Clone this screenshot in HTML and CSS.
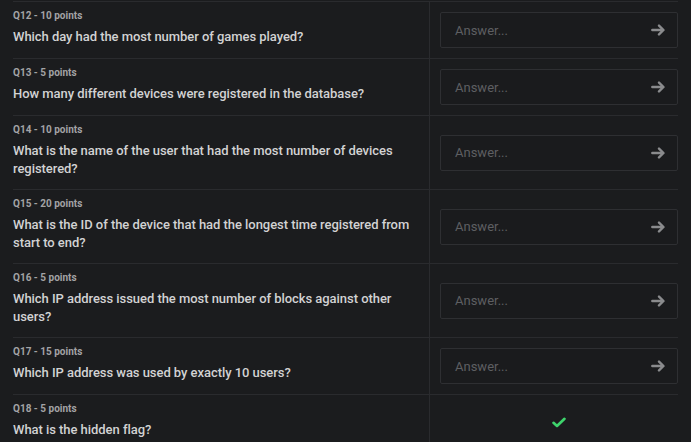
FILE: index.html
```html
<!DOCTYPE html>
<html>
<head>
<meta charset="utf-8">
<link rel="stylesheet" href="styles.css">
</head>
<body>
<div class="list">
  <div class="row">
    <div class="q"><div class="label">Q12 - 10 points</div><div class="text">Which day had the most number of games played?</div></div>
    <div class="a"><div class="answer"><span class="ph">Answer...</span><svg class="arrow" viewBox="0 0 14 12"><path d="M1.3 6H12.2M8 1.6L12.5 6L8 10.4" fill="none" stroke="currentColor" stroke-width="2.4" stroke-linecap="round" stroke-linejoin="round"/></svg></div></div>
  </div>
  <div class="row">
    <div class="q"><div class="label">Q13 - 5 points</div><div class="text">How many different devices were registered in the database?</div></div>
    <div class="a"><div class="answer"><span class="ph">Answer...</span><svg class="arrow" viewBox="0 0 14 12"><path d="M1.3 6H12.2M8 1.6L12.5 6L8 10.4" fill="none" stroke="currentColor" stroke-width="2.4" stroke-linecap="round" stroke-linejoin="round"/></svg></div></div>
  </div>
  <div class="row">
    <div class="q"><div class="label">Q14 - 10 points</div><div class="text">What is the name of the user that had the most number of devices registered?</div></div>
    <div class="a"><div class="answer"><span class="ph">Answer...</span><svg class="arrow" viewBox="0 0 14 12"><path d="M1.3 6H12.2M8 1.6L12.5 6L8 10.4" fill="none" stroke="currentColor" stroke-width="2.4" stroke-linecap="round" stroke-linejoin="round"/></svg></div></div>
  </div>
  <div class="row">
    <div class="q"><div class="label">Q15 - 20 points</div><div class="text">What is the ID of the device that had the longest time registered from start to end?</div></div>
    <div class="a"><div class="answer"><span class="ph">Answer...</span><svg class="arrow" viewBox="0 0 14 12"><path d="M1.3 6H12.2M8 1.6L12.5 6L8 10.4" fill="none" stroke="currentColor" stroke-width="2.4" stroke-linecap="round" stroke-linejoin="round"/></svg></div></div>
  </div>
  <div class="row">
    <div class="q"><div class="label">Q16 - 5 points</div><div class="text">Which IP address issued the most number of blocks against other users?</div></div>
    <div class="a"><div class="answer"><span class="ph">Answer...</span><svg class="arrow" viewBox="0 0 14 12"><path d="M1.3 6H12.2M8 1.6L12.5 6L8 10.4" fill="none" stroke="currentColor" stroke-width="2.4" stroke-linecap="round" stroke-linejoin="round"/></svg></div></div>
  </div>
  <div class="row">
    <div class="q"><div class="label">Q17 - 15 points</div><div class="text">Which IP address was used by exactly 10 users?</div></div>
    <div class="a"><div class="answer"><span class="ph">Answer...</span><svg class="arrow" viewBox="0 0 14 12"><path d="M1.3 6H12.2M8 1.6L12.5 6L8 10.4" fill="none" stroke="currentColor" stroke-width="2.4" stroke-linecap="round" stroke-linejoin="round"/></svg></div></div>
  </div>
  <div class="row">
    <div class="q"><div class="label">Q18 - 5 points</div><div class="text">What is the hidden flag?</div></div>
    <div class="a done"><svg class="check" viewBox="0 0 14 11"><path d="M1.5 5.8L5 9L12.5 1.8" fill="none" stroke="currentColor" stroke-width="2.6" stroke-linecap="round" stroke-linejoin="round"/></svg></div>
  </div>
</div>
</body>
</html>
```
FILE: styles.css
```css
html, body {
  margin: 0;
  padding: 0;
  background: #1b1c1e;
  height: 100%;
  overflow: hidden;
}
body {
  font-family: Roboto, "Liberation Sans", sans-serif;
  padding-top: 1px;
}
.list {
  margin: 0 13px;
}
.row {
  display: grid;
  grid-template-columns: 416px 1fr;
  border-top: 1px solid #2a2b2e;
}
.q {
  padding: 8px 16px 11px 0;
}
.label {
  font-size: 10px;
  line-height: 12px;
  font-weight: 700;
  color: #a3a3a5;
}
.text {
  margin-top: 6px;
  font-size: 13px;
  line-height: 18px;
  font-weight: 500;
  letter-spacing: -0.05px;
  color: #d2d2d3;
}
.a {
  border-left: 1px solid #2a2b2e;
  padding: 10px 0 10px 10px;
  display: flex;
  align-items: center;
}
.answer {
  flex: 1;
  box-sizing: border-box;
  height: 36px;
  border: 1px solid #2e2f32;
  border-radius: 2px;
  background: #1a1b1d;
  display: flex;
  align-items: center;
  padding: 0 12px 0 14px;
}
.ph {
  flex: 1;
  font-size: 13px;
  color: #5e5f62;
}
.arrow {
  width: 14px;
  height: 12px;
  color: #8a8b8d;
}
.done {
  justify-content: center;
}
.check {
  width: 14px;
  height: 11px;
  color: #3ed46c;
}
```
